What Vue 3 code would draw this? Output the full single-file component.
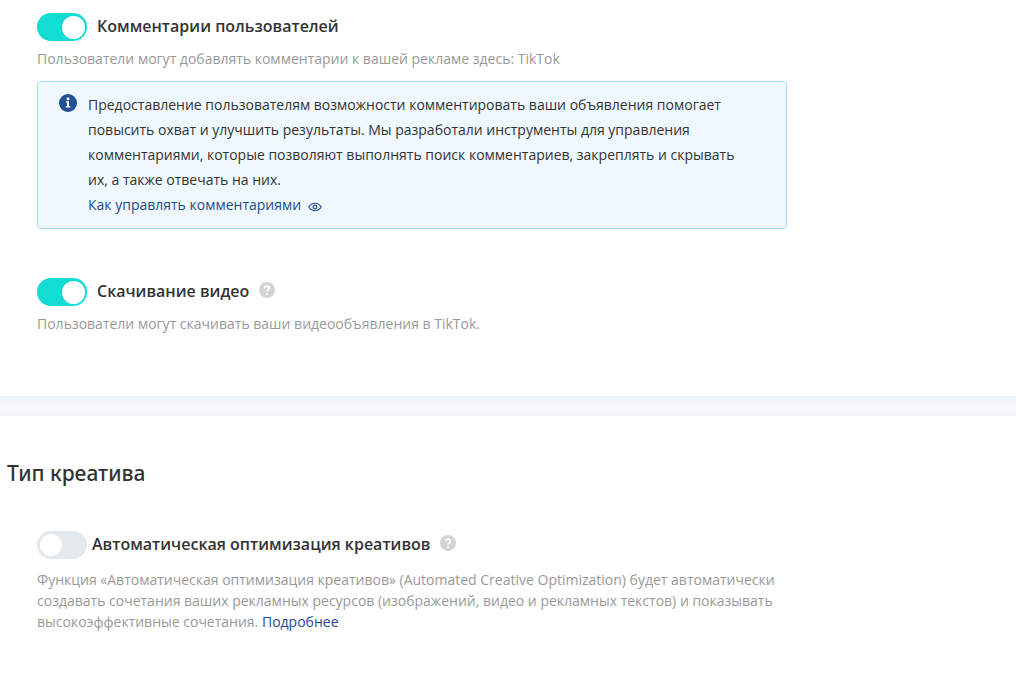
<script setup>
import { ref } from 'vue'

const comments = ref(true)
const downloads = ref(true)
const optimization = ref(false)
</script>

<template>
  <main class="page">
    <section class="panel panel-settings">
      <div class="setting">
        <div class="heading">
          <input id="comments" v-model="comments" class="switch" type="checkbox" role="switch" />
          <label class="title" for="comments">Комментарии пользователей</label>
        </div>
        <p class="hint">Пользователи могут добавлять комментарии к вашей рекламе здесь: TikTok</p>
        <div class="notice">
          <svg class="info" viewBox="0 0 18 18" aria-hidden="true">
            <circle cx="9" cy="9" r="9" fill="#254f93" />
            <circle cx="9" cy="5" r="1.4" fill="#fff" />
            <path d="M7 7.3h3v4.8h1.3v1.3H6.8v-1.3H8V8.6H7z" fill="#fff" />
          </svg>
          <div class="notice-body">
            <p class="notice-text">
              Предоставление пользователям возможности комментировать ваши объявления помогает
              повысить охват и улучшить результаты. Мы разработали инструменты для управления
              комментариями, которые позволяют выполнять поиск комментариев, закреплять и скрывать
              их, а также отвечать на них.
            </p>
            <a class="link notice-link" href="#">
              Как управлять комментариями
              <svg class="eye" viewBox="0 0 14 10" fill="none" stroke="#2b5296" aria-hidden="true">
                <path d="M.8 5C3.8 0 10.2 0 13.2 5 10.2 10 3.8 10 .8 5z" stroke-width="1.2" />
                <circle cx="7" cy="5" r="1.8" stroke-width="1.3" />
              </svg>
            </a>
          </div>
        </div>
      </div>

      <div class="setting">
        <div class="heading">
          <input id="downloads" v-model="downloads" class="switch" type="checkbox" role="switch" />
          <label class="title" for="downloads">Скачивание видео</label>
          <button class="help" type="button" aria-label="Справка">
            <svg viewBox="0 0 16 16" aria-hidden="true">
              <circle cx="8" cy="8" r="8" fill="#d3d4d6" />
              <path d="M5.7 6.3C5.7 3.3 10.3 3.3 10.3 6.2 10.3 7.9 8 7.9 8 9.7" fill="none" stroke="#fff" stroke-width="1.6" />
              <circle cx="8" cy="11.9" r="1" fill="#fff" />
            </svg>
          </button>
        </div>
        <p class="hint">Пользователи могут скачивать ваши видеообъявления в TikTok.</p>
      </div>
    </section>

    <section class="panel panel-creative">
      <h2 class="section-title">Тип креатива</h2>
      <div class="setting">
        <div class="heading heading-tight">
          <input id="optimization" v-model="optimization" class="switch" type="checkbox" role="switch" />
          <label class="title" for="optimization">Автоматическая оптимизация креативов</label>
          <button class="help" type="button" aria-label="Справка">
            <svg viewBox="0 0 16 16" aria-hidden="true">
              <circle cx="8" cy="8" r="8" fill="#d3d4d6" />
              <path d="M5.7 6.3C5.7 3.3 10.3 3.3 10.3 6.2 10.3 7.9 8 7.9 8 9.7" fill="none" stroke="#fff" stroke-width="1.6" />
              <circle cx="8" cy="11.9" r="1" fill="#fff" />
            </svg>
          </button>
        </div>
        <p class="hint hint-long">
          Функция «Автоматическая оптимизация креативов» (Automated Creative Optimization) будет автоматически
          создавать сочетания ваших рекламных ресурсов (изображений, видео и рекламных текстов) и показывать
          высокоэффективные сочетания. <a class="link" href="#">Подробнее</a>
        </p>
      </div>
    </section>
  </main>
</template>

<style>
body {
  background: #f6f8fb;
}
</style>

<style scoped>
.page {
  display: flex;
  flex-direction: column;
  gap: 20px;
  min-height: 100vh;
  color: #333;
  font: 14px/21px "Open Sans", "Noto Sans", sans-serif;
}
.panel {
  background: #fff;
  box-shadow: 0 2px 10px #e6ecf0;
}
.panel-settings {
  display: flex;
  flex-direction: column;
  gap: 48px;
  padding: 12px 36px 62px 37px;
}
.panel-creative {
  flex: 1;
  padding: 40px 36px 40px 7px;
}
.panel-creative .setting {
  margin: 40px 0 0 30px;
}
.setting {
  max-width: 750px;
}
.heading {
  display: flex;
  align-items: center;
  gap: 10px;
  height: 30px;
}
.heading-tight {
  gap: 5px;
}
.title {
  padding-bottom: 2px;
  font-size: 16px;
  font-weight: 600;
  line-height: 26px;
}
.switch {
  appearance: none;
  flex: none;
  width: 50px;
  height: 28px;
  margin: 0;
  padding: 3px;
  border-radius: 14px;
  background: #e4e9ed;
  display: flex;
  align-items: center;
}
.switch::before {
  content: "";
  width: 22px;
  height: 22px;
  border-radius: 50%;
  background: #fff;
}
.switch:checked {
  justify-content: flex-end;
  padding-right: 2px;
  background: #13dcd3;
}
.switch:checked::before {
  width: 23px;
  height: 23px;
}
.hint {
  margin: 6px 0 0;
  color: #999;
}
.hint-long {
  margin-top: 9px;
}
.help {
  display: flex;
  padding: 0 0 4px;
  border: 0;
  background: none;
}
.help svg {
  width: 16px;
  height: 16px;
}
.heading-tight .help {
  margin-left: 5px;
}
.notice {
  display: flex;
  gap: 11px;
  margin-top: 12px;
  padding: 10px 40px 11px 21px;
  border: 1px solid #a6d8ff;
  border-radius: 4px;
  background: #f0f8ff;
  line-height: 25px;
}
.info {
  flex: none;
  width: 18px;
  height: 18px;
  margin-top: 2px;
}
.notice-text {
  margin: 0;
}
.link {
  color: #254a8e;
  text-decoration: none;
}
.notice-link {
  display: flex;
  align-items: center;
  gap: 7px;
}
.eye {
  width: 14px;
  height: 10px;
  margin-top: 4px;
}
.section-title {
  margin: 0;
  font-family: "Noto Sans", "Open Sans", sans-serif;
  font-size: 21px;
  font-weight: 500;
  line-height: 34px;
}
</style>
